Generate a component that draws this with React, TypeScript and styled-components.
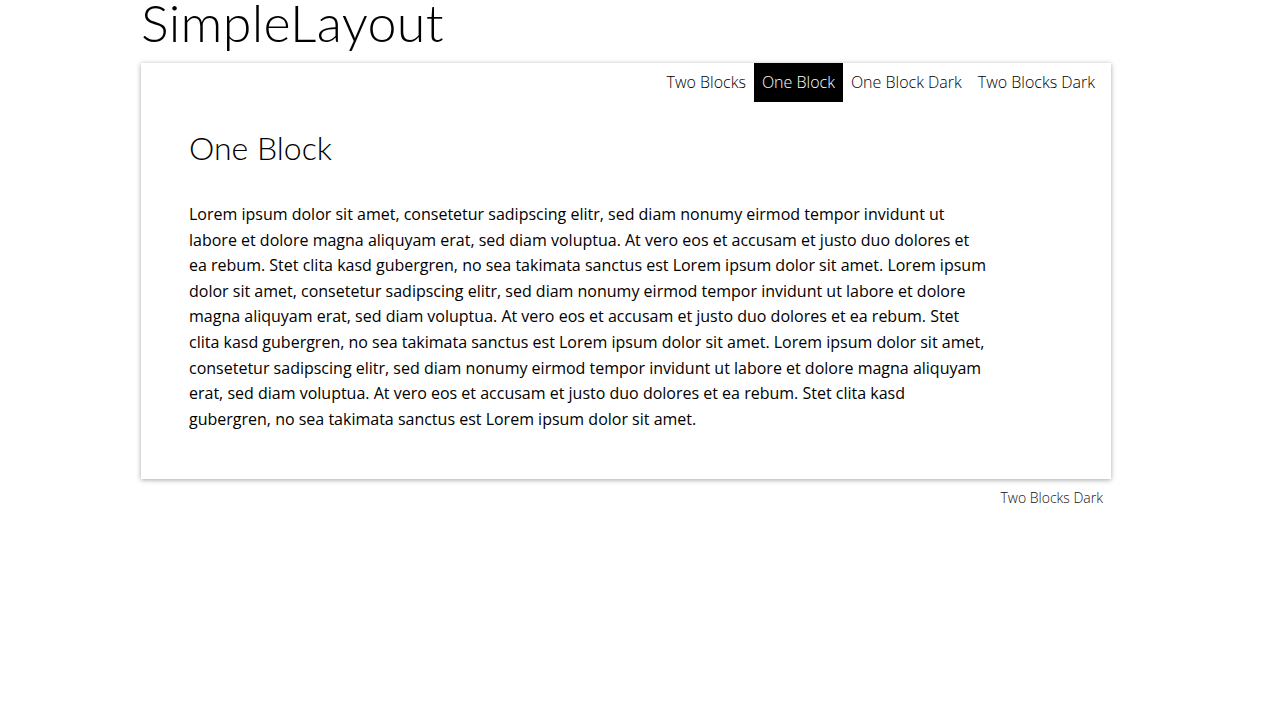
import React from 'react'
import styled, { createGlobalStyle } from 'styled-components'

const GlobalStyle = createGlobalStyle`
  body {
    margin: 0;
    background: #fff;
    color: #000;
    font-family: "Open Sans", "Liberation Sans", sans-serif;
  }
`

const Page = styled.div`
  width: 970px;
  margin: 0 0 0 141px;
`

const SiteTitle = styled.h1`
  margin: 0;
  font-family: Lato, "Open Sans", sans-serif;
  font-weight: 300;
  font-size: 52px;
  line-height: 44px;
  height: 63px;
  letter-spacing: 0.3px;
`

const Card = styled.div`
  background: #fff;
  box-shadow: 0 1px 5px rgba(0, 0, 0, 0.35);
`

const Nav = styled.nav`
  display: flex;
  justify-content: flex-end;
  padding-right: 8px;
`

const NavItem = styled.a<{ active?: boolean }>`
  display: block;
  padding: 0 8px;
  line-height: 39px;
  font-size: 16px;
  font-weight: 300;
  text-decoration: none;
  color: ${p => (p.active ? '#fff' : '#000')};
  background: ${p => (p.active ? '#000' : 'transparent')};
`

const Content = styled.div`
  padding: 26px 48px 47px;
`

const Heading = styled.h2`
  margin: 0 0 34px;
  font-family: Lato, "Open Sans", sans-serif;
  font-weight: 300;
  font-size: 32px;
  line-height: 40px;
`

const Text = styled.p`
  margin: 0;
  max-width: 800px;
  font-size: 16px;
  line-height: 25.6px;
`

const Footer = styled.div`
  display: flex;
  justify-content: flex-end;
  padding: 9px 8px 0;
  font-size: 14px;
  font-weight: 300;
  color: #111;
`

const navItems = ['Two Blocks', 'One Block', 'One Block Dark', 'Two Blocks Dark']

const lorem =
  'Lorem ipsum dolor sit amet, consetetur sadipscing elitr, sed diam nonumy eirmod tempor invidunt ut labore et dolore magna aliquyam erat, sed diam voluptua. At vero eos et accusam et justo duo dolores et ea rebum. Stet clita kasd gubergren, no sea takimata sanctus est Lorem ipsum dolor sit amet. Lorem ipsum dolor sit amet, consetetur sadipscing elitr, sed diam nonumy eirmod tempor invidunt ut labore et dolore magna aliquyam erat, sed diam voluptua. At vero eos et accusam et justo duo dolores et ea rebum. Stet clita kasd gubergren, no sea takimata sanctus est Lorem ipsum dolor sit amet. Lorem ipsum dolor sit amet, consetetur sadipscing elitr, sed diam nonumy eirmod tempor invidunt ut labore et dolore magna aliquyam erat, sed diam voluptua. At vero eos et accusam et justo duo dolores et ea rebum. Stet clita kasd gubergren, no sea takimata sanctus est Lorem ipsum dolor sit amet.'

const App = () => (
  <>
    <GlobalStyle />
    <Page>
      <SiteTitle>SimpleLayout</SiteTitle>
      <Card>
        <Nav>
          {navItems.map(item => (
            <NavItem key={item} active={item === 'One Block'}>{item}</NavItem>
          ))}
        </Nav>
        <Content>
          <Heading>One Block</Heading>
          <Text>{lorem}</Text>
        </Content>
      </Card>
      <Footer>Two Blocks Dark</Footer>
    </Page>
  </>
)

export default App
